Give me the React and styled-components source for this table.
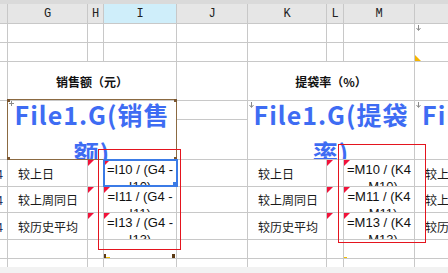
import React from 'react';
import styled, { createGlobalStyle, css } from 'styled-components';

const GlobalStyle = createGlobalStyle`
  html, body {
    margin: 0;
    padding: 0;
    background: #fff;
  }
  body {
    font-family: "Noto Sans CJK SC", "Liberation Sans", sans-serif;
  }
`;

const Screen = styled.div`
  position: relative;
  width: 448px;
  height: 273px;
  overflow: hidden;
  background: #f2f2f2;
`;

const TopStrip = styled.div`
  height: 4px;
  background: #dadada;
`;

const Sheet = styled.div`
  display: grid;
  grid-template-columns: 7px 79px 15px 72px 70px 78px 16px 70px 169px;
  grid-template-rows: 19px 18px 18px 38px 18px 39px 26px 25px 26px 18px 8px;
  gap: 1px;
  width: max-content;
  background: #c8c8c8;
`;

const Cell = styled.div`
  grid-column: ${p => p.$col};
  grid-row: ${p => p.$row};
  position: relative;
  min-width: 0;
  overflow: hidden;
  background: #fff;
  color: #1a1a1a;

  ${p => p.$marked && css`
    &::before {
      content: '';
      position: absolute;
      left: 0;
      top: 0;
      border-top: 6px solid #f2123a;
      border-right: 6px solid transparent;
    }
  `}

  ${p => p.$corner && css`
    &::after {
      content: '';
      position: absolute;
      left: 0;
      bottom: 0;
      border-bottom: 6px solid #f5b400;
      border-right: 6px solid transparent;
    }
  `}
`;

const HeadCell = styled(Cell)`
  display: flex;
  align-items: center;
  justify-content: center;
  background: ${p => (p.$active ? '#cfeefa' : '#e6e6e6')};
  font: 12px "Liberation Mono", monospace;
  color: #222;
`;

const RowNum = styled(Cell)`
  display: flex;
  align-items: center;
  justify-content: flex-end;
  padding-right: 4px;
  font-size: 12px;
  color: #23325f;
`;

const TitleCell = styled(Cell)`
  display: flex;
  align-items: center;
  justify-content: center;
  font-weight: bold;
  font-size: 12px;
  color: #111;
`;

const BigCell = styled(Cell)`
  text-align: center;
  color: #3e6cf3;
  font-weight: bold;
  font-size: 25px;
  letter-spacing: 1px;
  line-height: 38px;
`;

const BigText = styled.div`
  margin-top: -6px;
`;

const LabelCell = styled(Cell)`
  display: flex;
  align-items: center;
  padding-left: 10px;
  font-size: 12px;
  white-space: nowrap;
`;

const FormulaCell = styled(Cell)`
  padding: 1px 2px 0;
  text-align: center;
  font: 13px/17px "Liberation Sans", Arial, sans-serif;
  color: #111;
`;

const DownMark = styled.svg`
  position: absolute;
  left: 1px;
  top: 1px;
`;

const ColumnMark = styled.span`
  position: absolute;
  bottom: 0;
  ${p => (p.$side === 'left' ? 'left: -1px;' : 'right: 1px;')}
  width: 3px;
  height: 4px;
  background: #5c3a14;
`;

const YellowTick = styled.span`
  position: absolute;
  bottom: 0;
  left: ${p => p.$inset}px;
  width: 4px;
  height: 1px;
  background: #f5c000;
`;

const Frame = styled.div`
  position: absolute;
  box-sizing: border-box;
  left: ${p => p.$x}px;
  top: ${p => p.$y}px;
  width: ${p => p.$w}px;
  height: ${p => p.$h}px;
  border: ${p => p.$line};
  pointer-events: none;
`;

const SelectFrame = styled(Frame)`
  &::after {
    content: '';
    position: absolute;
    right: -2px;
    bottom: -2px;
    width: 5px;
    height: 5px;
    background: #3b7be6;
  }
`;

const Corner = styled.span`
  position: absolute;
  width: 3px;
  height: 3px;
  background: #7a5630;
  ${p => (p.$v === 'top' ? 'top: -1px;' : 'bottom: -1px;')}
  ${p => (p.$h === 'left' ? 'left: -1px;' : 'right: -1px;')}
`;

const MoveMark = styled.svg`
  position: absolute;
  left: 1px;
  top: 1px;
`;

const Arrow = () => (
  <DownMark width="5" height="6" viewBox="0 0 5 6">
    <path d="M2.5 0v5M0.5 3l2 2.5 2-2.5" stroke="#8a8a8a" strokeWidth="1" fill="none" />
  </DownMark>
);

const columns = ['', 'G', 'H', 'I', 'J', 'K', 'L', 'M', ''];

const blankRow = (row, extra = {}) =>
  columns.map((_, i) => (
    <Cell key={`${row}-${i}`} $col={`${i + 1}`} $row={`${row}`} $corner={extra.corner === i}>
      {extra.arrow === i && <Arrow />}
      {extra.marks === i && (
        <>
          <ColumnMark $side="left" />
          <ColumnMark $side="right" />
          <YellowTick $inset={2} />
        </>
      )}
      {extra.tick === i && <YellowTick $inset={-1} />}
    </Cell>
  ));

const dataRows = [
  { row: 7, label: '较上日', left: '=I10 / (G4 - I10)', right: '=M10 / (K4 - M10)' },
  { row: 8, label: '较上周同日', left: '=I11 / (G4 - I11)', right: '=M11 / (K4 - M11)' },
  { row: 9, label: '较历史平均', left: '=I13 / (G4 - I13)', right: '=M13 / (K4 - M13)' },
];

const App = () => {
  return (
    <Screen>
      <GlobalStyle />
      <TopStrip />
      <Sheet>
        {columns.map((name, i) => (
          <HeadCell key={`h-${i}`} $col={`${i + 1}`} $row="1" $active={name === 'I'}>
            {name}
          </HeadCell>
        ))}

        {blankRow(2, { arrow: 8 })}
        {blankRow(3, { corner: 8 })}

        <Cell $col="1" $row="4" />
        <TitleCell $col="2 / 5" $row="4">销售额（元）</TitleCell>
        <Cell $col="5" $row="4" />
        <TitleCell $col="6 / 9" $row="4">提袋率（%）</TitleCell>
        <Cell $col="9" $row="4" />

        <Cell $col="1" $row="5 / 7" />
        <BigCell $col="2 / 5" $row="5 / 7">
          <BigText>File1.G(销售额)</BigText>
        </BigCell>
        <Cell $col="5" $row="5" />
        <Cell $col="5" $row="6" />
        <BigCell $col="6 / 9" $row="5 / 7">
          <Arrow />
          <BigText>File1.G(提袋率)</BigText>
        </BigCell>
        <BigCell $col="9" $row="5 / 7">
          <Arrow />
          <BigText>File1.G(销售额)</BigText>
        </BigCell>

        {dataRows.map(r => (
          <React.Fragment key={r.row}>
            <RowNum $col="1" $row={`${r.row}`}>4</RowNum>
            <LabelCell $col="2" $row={`${r.row}`}>{r.label}</LabelCell>
            <Cell $col="3" $row={`${r.row}`} $marked />
            <FormulaCell $col="4" $row={`${r.row}`} $marked>{r.left}</FormulaCell>
            <Cell $col="5" $row={`${r.row}`} />
            <LabelCell $col="6" $row={`${r.row}`}>{r.label}</LabelCell>
            <Cell $col="7" $row={`${r.row}`} $marked />
            <FormulaCell $col="8" $row={`${r.row}`} $marked>{r.right}</FormulaCell>
            <LabelCell $col="9" $row={`${r.row}`}>{r.label}</LabelCell>
          </React.Fragment>
        ))}

        {blankRow(10, { marks: 3, tick: 7 })}
        {blankRow(11)}
      </Sheet>

      {/* picture frame around the merged title cell */}
      <Frame $x={7} $y={99} $w={170} $h={61} $line="1px solid #8b6a42">
        <Corner $v="top" $h="left" />
        <Corner $v="top" $h="right" />
        <Corner $v="bottom" $h="left" />
        <Corner $v="bottom" $h="right" />
        <MoveMark width="5" height="5" viewBox="0 0 5 5">
          <path d="M2.5 0v5M0 2.5h5" stroke="#8a8a8a" strokeWidth="1" />
        </MoveMark>
      </Frame>

      {/* red outlines */}
      <Frame $x={98} $y={149} $w={83} $h={101} $line="1px solid #e4141e" />
      <Frame $x={338} $y={144} $w={88} $h={99} $line="1px solid #e4141e" />

      {/* active cell */}
      <SelectFrame $x={103} $y={159} $w={75} $h={28} $line="2px solid #3b7be6" />
    </Screen>
  );
};

export default App;
